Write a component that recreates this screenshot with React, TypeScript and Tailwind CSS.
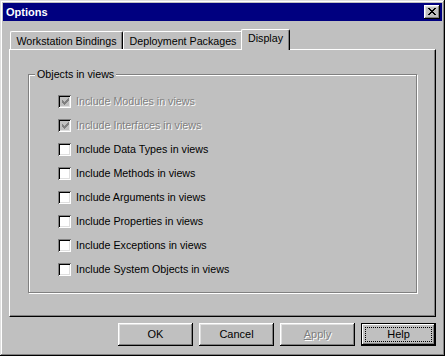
const font = { fontFamily: '"Liberation Sans", Arial, sans-serif' };

const raised =
  "shadow-[inset_-1px_-1px_#000,inset_1px_1px_#fff,inset_-2px_-2px_#808080,inset_2px_2px_#dfdfdf]";

const items = [
  { label: "Include Modules in views", checked: true, disabled: true },
  { label: "Include Interfaces in views", checked: true, disabled: true },
  { label: "Include Data Types in views" },
  { label: "Include Methods in views" },
  { label: "Include Arguments in views" },
  { label: "Include Properties in views" },
  { label: "Include Exceptions in views" },
  { label: "Include System Objects in views" },
];

const Check = ({ checked, disabled }: { checked?: boolean; disabled?: boolean }) => (
  <div
    className={`w-[13px] h-[13px] shrink-0 flex items-center justify-center ${
      disabled ? "bg-[#c0c0c0]" : "bg-white"
    } shadow-[inset_1px_1px_#808080,inset_-1px_-1px_#fff,inset_2px_2px_#000,inset_-2px_-2px_#dfdfdf]`}
  >
    {checked && (
      <svg width="7" height="7" viewBox="0 0 7 7" shapeRendering="crispEdges" className="ml-[1px] mt-[1px]">
        <path
          d="M6 0h1v1h-1zM5 1h2v1h-2zM0 2h1v1h-1zM4 2h3v1h-3zM0 3h2v1h-2zM3 3h3v1h-3zM0 4h5v1h-5zM1 5h3v1h-3zM2 6h1v1h-1z"
          fill={disabled ? "#808080" : "#000"}
        />
      </svg>
    )}
  </div>
);

const Button = ({
  children,
  disabled,
  isDefault,
}: {
  children: React.ReactNode;
  disabled?: boolean;
  isDefault?: boolean;
}) => (
  <div
    className={`w-[75px] h-[23px] flex items-stretch bg-[#c0c0c0] ${
      isDefault
        ? "p-[4px] shadow-[inset_0_0_0_1px_#000,inset_-2px_-2px_#000,inset_2px_2px_#fff,inset_-3px_-3px_#808080]"
        : "p-[4px] " + raised
    }`}
  >
    <div
      className={`flex-1 flex items-center justify-center text-[11px] ${
        isDefault ? "border border-dotted border-black" : ""
      } ${disabled ? "text-[#808080] [text-shadow:1px_1px_0_#fff]" : "text-black"}`}
    >
      {children}
    </div>
  </div>
);

const Tab = ({ label, width, selected }: { label: string; width: number; selected?: boolean }) => (
  <div
    className={`flex items-center justify-center text-[10.7px] text-black bg-[#c0c0c0] border-t border-l border-white border-r border-r-black rounded-t-[2px] shadow-[inset_-1px_0_#808080] ${
      selected ? "h-[21px] -mb-[1px] -mx-[2px] relative z-10 pb-[3px]" : "h-[18px] pt-[1px]"
    }`}
    style={{ width: selected ? width + 4 : width }}
  >
    {label}
  </div>
);

export default function App() {
  return (
    <div
      className="w-[445px] h-[356px] bg-[#c0c0c0] p-[3px] flex flex-col shadow-[inset_-1px_-1px_#000,inset_1px_1px_#dfdfdf,inset_-2px_-2px_#808080,inset_2px_2px_#fff]"
      style={font}
    >
      <div className="h-[18px] bg-[#000080] flex items-center justify-between pl-[3px] pr-[2px]">
        <span className="text-white font-bold text-[11px]">Options</span>
        <div className={`w-[16px] h-[14px] bg-[#c0c0c0] flex items-center justify-center ${raised}`}>
          <svg width="8" height="7" viewBox="0 0 8 7" shapeRendering="crispEdges" className="-mt-[1px] -ml-[1px]">
            <path
              d="M0 0h2v1h-2zM6 0h2v1h-2zM1 1h2v1h-2zM5 1h2v1h-2zM2 2h4v1h-4zM3 3h2v1h-2zM2 4h4v1h-4zM1 5h2v1h-2zM5 5h2v1h-2zM0 6h2v1h-2zM6 6h2v1h-2z"
              fill="#000"
            />
          </svg>
        </div>
      </div>

      <div className="pl-[6px] pr-[6px] mt-[8px] flex flex-col">
        <div className="flex items-end h-[20px] pl-[1px]">
          <Tab label="Workstation Bindings" width={113} />
          <Tab label="Deployment Packages" width={120} />
          <Tab label="Display" width={45} selected />
        </div>
        <div className="w-[427px] h-[268px] border-t border-l border-white border-r border-b border-r-black border-b-black shadow-[inset_-1px_-1px_#808080] pl-[18px] pt-[24px]">
          <div className="relative w-[389px] h-[219px] border border-[#808080] shadow-[inset_1px_1px_#fff,1px_1px_#fff] pl-[29px] pt-[14px] flex flex-col">
            <span className="absolute -top-[8px] left-[6px] px-[2px] bg-[#c0c0c0] text-[10.7px] text-black leading-[14px]">
              Objects in views
            </span>
            {items.map((it) => (
              <div key={it.label} className="h-[24px] flex items-center gap-[5px]">
                <Check checked={it.checked} disabled={it.disabled} />
                <span
                  className={`text-[10.7px] ${
                    it.disabled ? "text-[#808080] [text-shadow:1px_1px_0_#fff]" : "text-black"
                  }`}
                >
                  {it.label}
                </span>
              </div>
            ))}
          </div>
        </div>
        <div className="flex justify-end gap-[6px] mt-[6px] w-[427px]">
          <Button>OK</Button>
          <Button>Cancel</Button>
          <Button disabled>
            <span>
              <u>A</u>pply
            </span>
          </Button>
          <Button isDefault>Help</Button>
        </div>
      </div>
    </div>
  );
}
